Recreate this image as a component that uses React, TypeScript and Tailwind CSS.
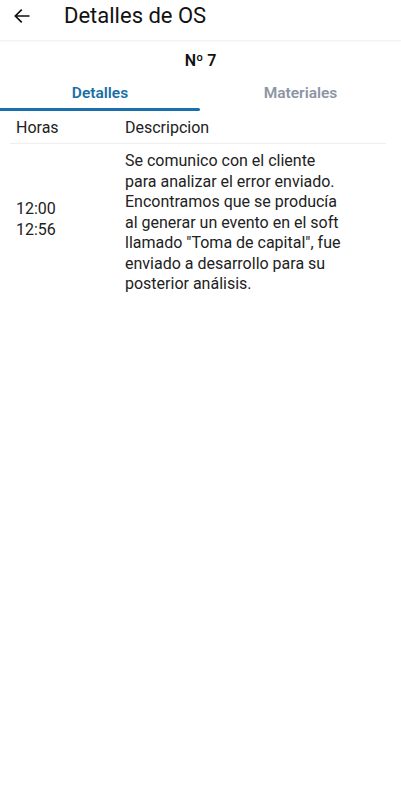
import React, { useState } from 'react';

const rows = [
  {
    inicio: '12:00',
    fin: '12:56',
    descripcion: [
      'Se comunico con el cliente',
      'para analizar el error enviado.',
      'Encontramos que se producía',
      'al generar un evento en el soft',
      'llamado "Toma de capital", fue',
      'enviado a desarrollo para su',
      'posterior análisis.',
    ],
  },
];

const BackArrow = () => (
  <svg width="20" height="20" viewBox="0 0 24 24" fill="none">
    <path
      d="M20 12H4.5M11 5l-7 7 7 7"
      stroke="#111"
      strokeWidth="2"
      strokeLinecap="square"
    />
  </svg>
);

const App: React.FC = () => {
  const [tab, setTab] = useState<'detalles' | 'materiales'>('detalles');

  return (
    <div
      className="w-[401px] h-[800px] bg-white text-[#1c1c1c] overflow-hidden"
      style={{ fontFamily: 'Roboto, "Noto Sans", sans-serif' }}
    >
      {/* header */}
      <div className="h-[41px] flex items-start pt-[3px] border-b border-[#f3f3f3] shadow-[0_1px_2px_rgba(0,0,0,0.03)]">
        <button className="w-[46px] h-[26px] flex items-center pl-[12px]">
          <BackArrow />
        </button>
        <h1 className="ml-[18px] text-[22px] leading-[26px] text-[#111]">
          Detalles de OS
        </h1>
      </div>

      <div className="pt-[10px] text-center text-[16px] leading-[20px] font-semibold text-[#111]">
        Nº 7
      </div>

      {/* tabs */}
      <div className="mt-[1px] flex">
        <button
          onClick={() => setTab('detalles')}
          className="w-[200px] h-[39px] flex flex-col items-center justify-between"
        >
          <span
            className={`pt-[12px] text-[15.5px] leading-[18px] font-semibold ${
              tab === 'detalles' ? 'text-[#1a6ea5]' : 'text-[#8c94a5]'
            }`}
          >
            Detalles
          </span>
          <span
            className={`w-full h-[3px] rounded-r-full ${
              tab === 'detalles' ? 'bg-[#1b70ab]' : 'bg-transparent'
            }`}
          />
        </button>
        <button
          onClick={() => setTab('materiales')}
          className="w-[201px] h-[39px] flex flex-col items-center justify-between"
        >
          <span
            className={`pt-[12px] text-[15.5px] leading-[18px] font-semibold ${
              tab === 'materiales' ? 'text-[#1a6ea5]' : 'text-[#8c94a5]'
            }`}
          >
            Materiales
          </span>
          <span
            className={`w-full h-[3px] rounded-l-full ${
              tab === 'materiales' ? 'bg-[#1b70ab]' : 'bg-transparent'
            }`}
          />
        </button>
      </div>

      {/* table */}
      <div className="pl-[10px] pr-[15px]">
        <div className="flex h-[33px] items-end pb-[3px] border-b border-[#eeeeee] text-[16px] text-[#222]">
          <div className="w-[115px] pl-[6px]">Horas</div>
          <div>Descripcion</div>
        </div>
        {rows.map((row, i) => (
          <div key={i} className="flex items-center pt-[7px] text-[16px]">
            <div className="w-[115px] pl-[6px] pb-[8px] leading-[21px] text-[#222]">
              <div>{row.inicio}</div>
              <div>{row.fin}</div>
            </div>
            <div className="flex-1 leading-[20.5px] text-[#222]">
              {row.descripcion.map(line => (
                <div key={line} className="whitespace-nowrap">
                  {line}
                </div>
              ))}
            </div>
          </div>
        ))}
      </div>
    </div>
  );
};

export default App;
